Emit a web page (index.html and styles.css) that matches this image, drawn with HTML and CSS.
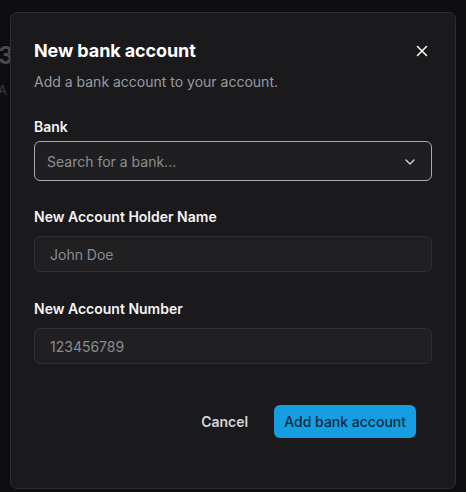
FILE: index.html
```html
<!DOCTYPE html>
<html lang="en">
<head>
<meta charset="utf-8">
<title>New bank account</title>
<link rel="stylesheet" href="styles.css">
</head>
<body>
<div class="page">
  <div class="bg-amount">3</div>
  <div class="bg-sub">A</div>
</div>
<div class="dialog" role="dialog" aria-labelledby="dlg-title">
  <div class="dialog-header">
    <h2 id="dlg-title" class="dialog-title">New bank account</h2>
    <button class="close-btn" aria-label="Close">
      <svg width="16" height="16" viewBox="0 0 16 16" fill="none" stroke="#ffffff" stroke-width="1.5" stroke-linecap="round">
        <path d="M3.5 3.5L12.5 12.5M12.5 3.5L3.5 12.5"/>
      </svg>
    </button>
  </div>
  <p class="dialog-desc">Add a bank account to your account.</p>
  <form class="form">
    <div class="field">
      <label class="label label-bank">Bank</label>
      <div class="select">
        <span class="placeholder">Search for a bank...</span>
        <svg class="chevron" width="12" height="8" viewBox="0 0 12 8" fill="none" stroke="#d0d0d4" stroke-width="1.4" stroke-linecap="round" stroke-linejoin="round">
          <path d="M2 2L6 6L10 2"/>
        </svg>
      </div>
    </div>
    <div class="field">
      <label class="label">New Account Holder Name</label>
      <div class="input"><span class="placeholder-in">John Doe</span></div>
    </div>
    <div class="field">
      <label class="label">New Account Number</label>
      <div class="input"><span class="placeholder-in">123456789</span></div>
    </div>
  </form>
  <div class="footer">
    <button class="btn-cancel" type="button">Cancel</button>
    <button class="btn-primary" type="button">Add bank account</button>
  </div>
</div>
</body>
</html>
```
FILE: styles.css
```css
* { box-sizing: border-box; }
html, body {
  margin: 0;
  padding: 0;
  width: 466px;
  height: 492px;
  overflow: hidden;
  background: #0e0e10;
  font-family: Inter, "Noto Sans", sans-serif;
  color: #ffffff;
}
.page {
  padding-top: 44px;
  margin-left: -2px;
}
.bg-amount {
  font-size: 24px;
  font-weight: 700;
  color: #4a4a4e;
  line-height: 24px;
}
.bg-sub {
  margin-top: 14px;
  font-size: 13px;
  color: #3a3a3e;
  line-height: 16px;
}
.dialog {
  position: absolute;
  left: 10px;
  top: 12px;
  width: 446px;
  height: 477px;
  background: #1a1a1d;
  border: 1px solid #2d2d31;
  border-radius: 7px;
  padding: 24px 23px 0 23px;
  display: flex;
  flex-direction: column;
}
.dialog-header {
  display: flex;
  align-items: center;
  justify-content: space-between;
  height: 28px;
}
.dialog-title {
  margin: 0;
  font-size: 18px;
  font-weight: 700;
  line-height: 28px;
  letter-spacing: -0.1px;
}
.close-btn {
  background: none;
  border: 0;
  padding: 0;
  width: 16px;
  height: 16px;
  margin-right: 2px;
  display: flex;
}
.dialog-desc {
  margin: 7px 0 0 0;
  font-size: 14px;
  line-height: 20px;
  color: #9a9aa0;
}
.form {
  margin-top: 25px;
  display: flex;
  flex-direction: column;
  gap: 26px;
}
.field {
  display: flex;
  flex-direction: column;
}
.label {
  font-size: 14px;
  font-weight: 600;
  line-height: 20px;
  color: #f4f4f5;
  margin-bottom: 9px;
}
.label-bank { margin-bottom: 4px; }
.select {
  height: 40px;
  border: 1px solid #a9a9ae;
  border-radius: 6px;
  background: #1f1f22;
  display: flex;
  align-items: center;
  justify-content: space-between;
  padding: 0 15px 0 12px;
}
.placeholder {
  font-size: 14px;
  color: #8e8e94;
}
.chevron { margin-top: 1px; }
.input {
  height: 36px;
  border: 1px solid #2e3038;
  border-radius: 6px;
  background: #202023;
  display: flex;
  align-items: center;
  padding: 0 15px;
}
.form .field:nth-child(3) { margin-top: 1px; }
.placeholder-in {
  font-size: 14px;
  color: #8a8a8f;
}
.footer {
  margin-top: 40px;
  display: flex;
  justify-content: flex-end;
  align-items: center;
  gap: 10px;
  padding-right: 16px;
}
.btn-cancel {
  background: none;
  border: 0;
  font-family: inherit;
  font-size: 14px;
  font-weight: 600;
  color: #d4d4d8;
  padding: 0 16px;
  height: 34px;
}
.btn-primary {
  background: #159ee2;
  border: 0;
  border-radius: 6px;
  font-family: inherit;
  font-size: 14px;
  font-weight: 500;
  color: #0d2a40;
  height: 33px;
  padding: 0 10px;
}
```
